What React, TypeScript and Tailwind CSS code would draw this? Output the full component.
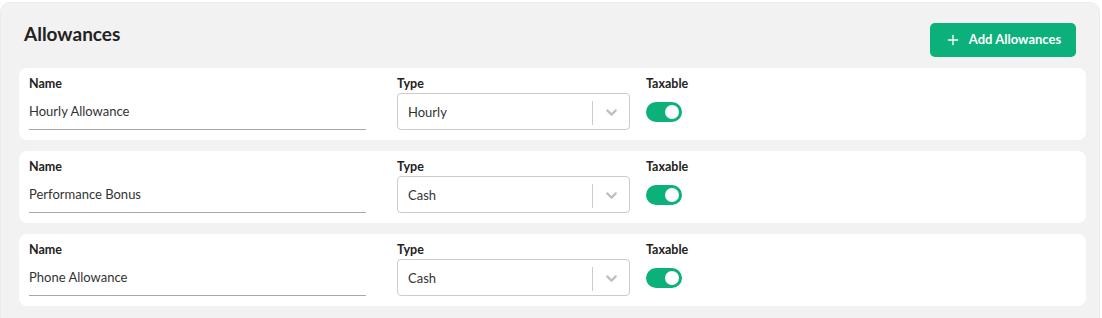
import { Plus, ChevronDown } from "lucide-react";

interface AllowanceType {
  name: string;
  type: string;
  taxable: boolean;
}

const allowances: AllowanceType[] = [
  { name: "Hourly Allowance", type: "Hourly", taxable: true },
  { name: "Performance Bonus", type: "Cash", taxable: true },
  { name: "Phone Allowance", type: "Cash", taxable: true },
];

function AllowanceRow({ item }: { item: AllowanceType }) {
  return (
    <div className="flex h-[72px] rounded-[8px] bg-white pl-[10px] pt-[8px]">
      <div className="w-[337px]">
        <p className="h-[16px] text-[12.5px] font-bold leading-[16px] text-[#222]">Name</p>
        <div className="mt-[1px] flex h-[37px] items-center border-b border-[#a8a8a8] pt-[2px] text-[13px] text-[#333]">
          {item.name}
        </div>
      </div>

      <div className="ml-[31px] w-[233px]">
        <p className="h-[16px] text-[12.5px] font-bold leading-[16px] text-[#222]">Type</p>
        <div className="mt-[1px] flex h-[37px] items-center rounded-[4px] border border-[#cccccc] pl-[10px] pt-[2px] text-[13px] text-[#333]">
          <span className="flex-1">{item.type}</span>
          <span className="h-[24px] w-px bg-[#cccccc]" />
          <span className="flex w-[36px] justify-center text-[#bdbdbd]">
            <ChevronDown size={17} strokeWidth={3} />
          </span>
        </div>
      </div>

      <div className="ml-[16px]">
        <p className="h-[16px] text-[12.5px] font-bold leading-[16px] text-[#222]">Taxable</p>
        <div className="mt-[1px] flex h-[37px] items-center">
          <div
            className={
              item.taxable
                ? "flex h-[20px] w-[36px] items-center justify-end rounded-full bg-[#0bb07b] pr-[3px]"
                : "flex h-[20px] w-[36px] items-center justify-start rounded-full bg-[#ccc] pl-[3px]"
            }
          >
            <span className="h-[14px] w-[14px] rounded-full bg-white" />
          </div>
        </div>
      </div>
    </div>
  );
}

export default function App() {
  return (
    <div className="h-[318px] w-[1102px] overflow-hidden bg-white font-['Lato',sans-serif]">
      <div className="mt-[2px] h-[330px] w-[1100px] rounded-[10px] border border-[#ececec] bg-[#f2f2f2] pl-[18px] pr-[13px] pt-[20px]">
        <div className="flex h-[34px] items-start justify-between">
          <h2 className="-mt-[1px] ml-[5px] text-[19px] font-bold leading-[24px] text-[#222]">Allowances</h2>
          <button className="mr-[10px] flex h-[34px] w-[146px] items-center justify-center gap-[8px] rounded-[5px] bg-[#0bb07b] text-[13px] font-bold text-white">
            <Plus size={16} strokeWidth={2} />
            Add Allowances
          </button>
        </div>
        <div className="mt-[11px] flex flex-col gap-[11px]">
          {allowances.map((item) => (
            <AllowanceRow key={item.name} item={item} />
          ))}
        </div>
      </div>
    </div>
  );
}
